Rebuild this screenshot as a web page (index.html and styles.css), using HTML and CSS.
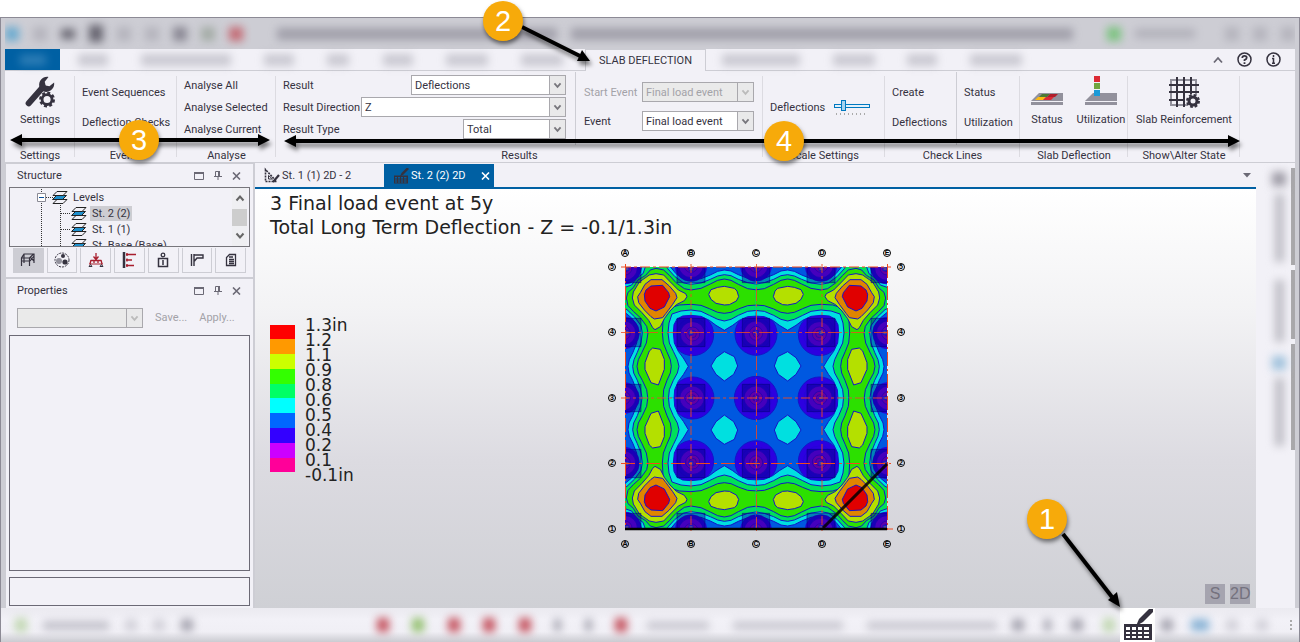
FILE: index.html
```html
<!DOCTYPE html>
<html lang="en">
<head>
<meta charset="utf-8">
<title>Slab Deflection</title>
<link rel="stylesheet" href="styles.css">
</head>
<body>
<svg class="defs" width="0" height="0" aria-hidden="true">
  <defs>
    <symbol id="chev" viewBox="0 0 10 8"><path d="M1.5 1.5 5 5.5 8.5 1.5" fill="none" stroke="currentColor" stroke-width="2"/></symbol>
    <symbol id="maximize" viewBox="0 0 10 8"><path d="M.5.5h9v7h-9z" fill="none" stroke="currentColor"/><path d="M0 0h10v2H0z" fill="currentColor"/></symbol>
    <symbol id="pin" viewBox="0 0 8 9"><path d="M1.5.5h4v5h-4zM0 5.5h8M4 6v3" fill="none" stroke="currentColor"/><path d="M4 0h2v6H4z" fill="currentColor"/></symbol>
    <symbol id="close" viewBox="0 0 9 8"><path d="M1 .5l7 7M8 .5l-7 7" fill="none" stroke="currentColor" stroke-width="1.6"/></symbol>
    <symbol id="level" viewBox="0 0 16 13"><path d="M5 8.500h10l-4 4H1z" fill="#f2f1f7" stroke="#222"/><path d="M4.500 4.500h10l-4 4H.5z" fill="#2090cc" stroke="#222"/><path d="M5 .5h10l-4 4H1z" fill="#f2f1f7" stroke="#222"/></symbol>
    <symbol id="slabpen" viewBox="0 0 32 32"><path d="M2 15h28v16H2z" fill="currentColor"/><path d="M4 18h4v3H4zm6 0h4v3h-4zm6 0h4v3h-4zm6 0h5v3h-5zM4 23h4v2H4zm6 0h4v2h-4zm6 0h4v2h-4zm6 0h5v2h-5zM4 27h4v2H4zm6 0h4v2h-4zm6 0h4v2h-4zm6 0h5v2h-5z" fill="var(--hole,#fff)"/><path d="M14 17l3-7L28-1h3v4L21 13z" fill="currentColor"/></symbol>
  </defs>
</svg>

<div class="window">
  <header class="titlebar" aria-label="Title bar">
    <i class="b logo"></i><i class="b faint"></i><i class="b wide"></i><i class="b big"></i><i class="b faint"></i><i class="b faint"></i><i class="b"></i><i class="b green"></i><i class="b red"></i>
    <i class="b title"></i><i class="b title long"></i><i class="b dot"></i><i class="b name"></i><i class="b faint"></i><i class="b faint"></i><i class="b faint"></i>
  </header>

  <nav class="tabs" aria-label="Ribbon tabs">
    <button class="file" type="button" aria-label="File"><i class="b"></i></button>
    <span class="ghost left"><i class="b w30"></i><i class="b w90"></i><i class="b w30"></i><i class="b w20"></i><i class="b w30"></i><i class="b w40"></i><i class="b w40"></i></span>
    <button class="tab" type="button">SLAB DEFLECTION</button>
    <span class="ghost right"><i class="b w80"></i><i class="b w40"></i><i class="b w30"></i><i class="b w50"></i></span>
    <span class="helpers">
      <button type="button" aria-label="Collapse ribbon"><svg width="10" height="8"><path d="M1 6.500 5 2l4 4.500" fill="none" stroke="#6b6975" stroke-width="1.800"/></svg></button>
      <button type="button" aria-label="Help"><svg width="15" height="15"><circle cx="7.500" cy="7.500" r="6.500" fill="none" stroke="#35323f" stroke-width="1.500"/><path d="M5.300 6q0-2.200 2.200-2.200T9.700 5.700q0 1.300-2.200 2.400v1M7.500 10.200v1.800" fill="none" stroke="#35323f" stroke-width="1.800"/></svg></button>
      <button type="button" aria-label="About"><svg width="15" height="15"><circle cx="7.500" cy="7.500" r="6.500" fill="none" stroke="#35323f" stroke-width="1.500"/><path d="M7.500 3v2M6 6.500h1.500V11M6 11.200h3" fill="none" stroke="#35323f" stroke-width="1.500"/></svg></button>
    </span>
  </nav>

  <section class="ribbon" aria-label="Slab deflection ribbon">
    <div class="group g-settings">
      <div class="body"><button class="large" type="button">
        <svg width="34" height="34" viewBox="0 0 34 34"><path d="M5 29 20 12" stroke="#35323f" stroke-width="6.500" stroke-linecap="round"/><path d="M17 13C14 7 19 0 26 1l-4 5 1 4 4 1 5-4c1 7-6 12-12 9z" fill="#35323f"/><circle cx="24.500" cy="25" r="5.300" fill="none" stroke="#35323f" stroke-width="3"/><circle cx="24.500" cy="25" r="7.200" fill="none" stroke="#35323f" stroke-width="2.500" stroke-dasharray="3.200 2.450"/></svg>
        <span>Settings</span></button></div>
      <h2>Settings</h2>
    </div>
    <div class="group g-events">
      <div class="body two"><button type="button">Event Sequences</button><button type="button">Deflection Checks</button></div>
      <h2>Events</h2>
    </div>
    <div class="group g-analyse">
      <div class="body three"><button type="button">Analyse All</button><button type="button">Analyse Selected</button><button type="button">Analyse Current</button></div>
      <h2>Analyse</h2>
    </div>
    <div class="group g-results">
      <div class="body split">
        <div class="fields">
          <div class="field"><label for="result">Result</label><span class="combo c-mid"><select id="result"><option>Deflections</option></select><svg><use href="#chev"/></svg></span></div>
          <div class="field"><label for="dir">Result Direction</label><span class="combo c-wide"><select id="dir"><option>Z</option></select><svg><use href="#chev"/></svg></span></div>
          <div class="field"><label for="type">Result Type</label><span class="combo c-small"><select id="type"><option>Total</option></select><svg><use href="#chev"/></svg></span></div>
        </div>
        <div class="fields events">
          <div class="field off"><label for="start">Start Event</label><span class="combo c-event"><select id="start" disabled><option>Final load event</option></select><svg><use href="#chev"/></svg></span></div>
          <div class="field"><label for="event">Event</label><span class="combo c-event"><select id="event"><option>Final load event</option></select><svg><use href="#chev"/></svg></span></div>
        </div>
      </div>
      <h2>Results</h2>
    </div>
    <div class="group g-scale">
      <div class="body scale"><label for="scale">Deflections</label><span class="slider"><input id="scale" type="range" min="0" max="100" value="20"><i></i></span></div>
      <h2>Scale Settings</h2>
    </div>
    <div class="group g-lines">
      <div class="body split">
        <div class="two"><button type="button">Create</button><button type="button">Deflections</button></div>
        <div class="two second"><button type="button">Status</button><button type="button">Utilization</button></div>
      </div>
      <h2>Check Lines</h2>
    </div>
    <div class="group g-slab">
      <div class="body pair">
        <button class="large" type="button"><svg width="32" height="32" viewBox="0 0 32 32"><path d="M0 25 8 17h24v8zM0 26h32v3H0z" fill="#92919c"/><path d="M11 18h8l-3 3H8z" fill="#4b7a35"/><path d="M19 18h8l-3 3h-8z" fill="#b01e2b"/><path d="M7 21h8l-3 3H4z" fill="#fbb913"/><path d="M15 21h8l-3 3h-8z" fill="#dc2a35"/></svg><span>Status</span></button>
        <button class="large" type="button"><svg width="32" height="32" viewBox="0 0 32 32"><path d="M0 25 8 17h24v8zM0 26h32v3H0z" fill="#92919c"/><path d="M9 0h6v6H9z" fill="#dc2a35"/><path d="M9 7h6v6H9z" fill="#71a540"/><path d="M9 14h6v6H9z" fill="#1a9ad8"/></svg><span>Utilization</span></button>
      </div>
      <h2>Slab Deflection</h2>
    </div>
    <div class="group g-state">
      <div class="body"><button class="large" type="button"><svg width="32" height="32" viewBox="0 0 32 32"><path d="M3 4h25v25H3z" fill="none" stroke="#92919c" stroke-width="2"/><path d="M9 1v30M16 1v30M23 1v20M1 9h30M1 16h30M1 24h16" stroke="#35323f" stroke-width="2"/><circle cx="25" cy="25" r="7" fill="#f2f1f7"/><circle cx="25" cy="25" r="4" fill="none" stroke="#35323f" stroke-width="3"/><circle cx="25" cy="25" r="6" fill="none" stroke="#35323f" stroke-width="2" stroke-dasharray="2.700 2"/></svg><span>Slab Reinforcement</span></button></div>
      <h2>Show\Alter State</h2>
    </div>
  </section>

  <main class="workspace">
    <aside class="side">
      <section class="panel structure">
        <header><h3>Structure</h3><button type="button" aria-label="Maximize"><svg width="10" height="8"><use href="#maximize"/></svg></button><button type="button" aria-label="Pin"><svg width="8" height="9"><use href="#pin"/></svg></button><button type="button" aria-label="Close"><svg width="9" height="8"><use href="#close"/></svg></button></header>
        <div class="tree">
          <ul>
            <li class="root"><svg class="lead" width="20" height="16"><path d="M5.500 0v16M10 8.500h10" stroke="#333" stroke-dasharray="1 1"/><path d="M1.500 4.500h8v8h-8z" fill="#fff" stroke="#8a8a94"/><path d="M3 8.500h5" stroke="#0b4f9a"/></svg><svg width="16" height="13"><use href="#level"/></svg><span>Levels</span></li>
            <li class="sel"><svg class="lead" width="39" height="16"><path d="M5.500 0v16M24.500 0v16M25 8.500h10" stroke="#333" stroke-dasharray="1 1"/></svg><svg width="16" height="13"><use href="#level"/></svg><span>St. 2 (2)</span></li>
            <li><svg class="lead" width="39" height="16"><path d="M5.500 0v16M24.500 0v16M25 8.500h10" stroke="#333" stroke-dasharray="1 1"/></svg><svg width="16" height="13"><use href="#level"/></svg><span>St. 1 (1)</span></li>
            <li><svg class="lead" width="39" height="16"><path d="M5.500 0v16M24.500 0v16" stroke="#333" stroke-dasharray="1 1"/></svg><svg width="16" height="13"><use href="#level"/></svg><span>St. Base (Base)</span></li>
          </ul>
          <div class="scroll"><svg class="up" width="10" height="8"><use href="#chev"/></svg><i></i><svg width="10" height="8"><use href="#chev"/></svg></div>
        </div>
        <div class="tools">
          <button class="on" type="button" aria-label="Structure"><svg width="16" height="16"><path d="M1.500 14V6L4 2h10v9M1.500 6h8V14M9.500 6l4-4M4 2v9M1 9h9M10 5l4 4M10 9l4-5" fill="none" stroke="#35323f" stroke-width="1.200"/></svg></button>
          <button type="button" aria-label="Groups"><svg width="16" height="16"><circle cx="8" cy="8" r="7" fill="none" stroke="#35323f" stroke-dasharray="2 1"/><circle cx="5" cy="9" r="3" fill="#92919c"/><circle cx="9" cy="4" r="2" fill="#35323f"/><circle cx="11" cy="10" r="2.600" fill="#35323f"/></svg></button>
          <button type="button" aria-label="Loading"><svg width="16" height="16"><path d="M8 1v6M5.500 4.500 8 7.500l2.500-3M3 8.500h10M3 8l-1 4M13 8l1 4M6 8v3M10 8v3" fill="none" stroke="#a81e2d" stroke-width="1.300"/><path d="M1 12h14" stroke="#a81e2d"/><path d="M1 14.500l1.500-2 1.500 2zM12 14.500l1.500-2 1.500 2z" fill="none" stroke="#35323f"/></svg></button>
          <button type="button" aria-label="Levels"><svg width="16" height="16"><path d="M2 0v16" stroke="#35323f" stroke-width="2.500"/><path d="M4 2.500h10M4 8h6M4 13.500h8M5 1v3M5 6.500v3M5 12v3" stroke="#a81e2d" stroke-width="1.400" fill="none"/></svg></button>
          <button type="button" aria-label="Weight"><svg width="16" height="16"><path d="M3.500 6.500h9v8h-9zM8 8v5M3 6.500h10" fill="none" stroke="#35323f" stroke-width="1.500"/><circle cx="8" cy="3" r="1.800" fill="none" stroke="#35323f" stroke-width="1.300"/></svg></button>
          <button type="button" aria-label="Connections"><svg width="16" height="16"><path d="M2.500 2v12M5 2v12M5 3h9v3H8L5.500 9" fill="none" stroke="#35323f" stroke-width="1.400"/></svg></button>
          <button type="button" aria-label="Reports"><svg width="16" height="16"><path d="M6.500 2.500h6v11h-9v-8zM6 7.500h5M6 9.500h5M6 11.500h5M6 5h4" fill="none" stroke="#35323f" stroke-width="1.300"/></svg></button>
        </div>
      </section>
      <section class="panel properties">
        <header><h3>Properties</h3><button type="button" aria-label="Maximize"><svg width="10" height="8"><use href="#maximize"/></svg></button><button type="button" aria-label="Pin"><svg width="8" height="9"><use href="#pin"/></svg></button><button type="button" aria-label="Close"><svg width="9" height="8"><use href="#close"/></svg></button></header>
        <div class="bar off"><span class="combo c-props"><select disabled aria-label="Property set"><option></option></select><svg><use href="#chev"/></svg></span><button type="button" disabled>Save...</button><button type="button" disabled>Apply...</button></div>
        <div class="box grow"></div>
        <div class="box hint"></div>
      </section>
    </aside>

    <section class="docs">
      <div class="doctabs">
        <button type="button"><svg width="16" height="16"><path d="M1.500 1.500v12h11z" fill="none" stroke="#35323f" stroke-width="1.600" stroke-dasharray="2 1"/><path d="M4.500 7.500v3.500h4z" fill="none" stroke="#35323f"/><path d="M9 14l6-7" stroke="#35323f" stroke-width="2.200"/></svg>St. 1 (1) 2D - 2</button>
        <button class="active" type="button"><svg class="pen" width="16" height="16"><use href="#slabpen"/></svg>St. 2 (2) 2D<svg class="x" width="9" height="8"><use href="#close"/></svg></button>
        <svg class="more" width="8" height="5"><path d="M0 0h8L4 4.500z" fill="#6b6975"/></svg>
      </div>
      <div class="view">
        <div class="caption"><p>3 Final load event at 5y</p><p>Total Long Term Deflection - Z = -0.1/1.3in</p></div>
        <div class="legend">
          <div class="swatches"><i class="s1"></i><i class="s2"></i><i class="s3"></i><i class="s4"></i><i class="s5"></i><i class="s6"></i><i class="s7"></i><i class="s8"></i><i class="s9"></i><i class="s10"></i></div>
          <ol><li>1.3in</li><li>1.2</li><li>1.1</li><li>0.9</li><li>0.8</li><li>0.6</li><li>0.5</li><li>0.4</li><li>0.2</li><li>0.1</li><li>-0.1in</li></ol>
        </div>
        <svg class="plot" width="310" height="310" viewBox="0 0 310 310" role="img" aria-label="Deflection contours">
          <defs>
            <clipPath id="qc"><path d="M72 83h394v395H72z"/></clipPath>
            <g id="col" stroke="#2408d0" stroke-width="2">
              <circle r="48" fill="#2c00e0"/>
              <circle r="37" fill="#7800e8"/>
              <circle r="21" fill="#a800c0"/>
              <circle r="11" fill="#b000b0"/>
            </g>
            <g id="sq"><path d="M-42-43h84v85h-84z" fill="#000080" fill-opacity=".42" stroke="#00007a" stroke-opacity=".8" stroke-width="2"/><path d="M-6-6H6V6H-6z" fill="#505a96" fill-opacity=".7"/></g>
            <g id="quarter" clip-path="url(#qc)" stroke="#1414c8" stroke-width="3" stroke-linejoin="round">
              <path d="M60 70h420v420H60z" fill="#0058e0"/>
              <g fill="#2c00e0">
                <circle cx="275" cy="286" r="63"/><circle cx="466" cy="284" r="64"/><circle cx="275" cy="477" r="64"/><circle cx="466" cy="477" r="66"/>
              </g>
              <path fill="#00e0e0" d="M470 122 440 117 412 106 390 95 370 92 350 96 328 107 300 118 270 122 245 118 225 103 206 80H122L118 100 100 111 89 129 69 133V217L92 236 107 256 111 281 107 311 96 339 85 361 81 381 84 401 95 423 106 451 111 481H219L221 451 232 426 247 406 262 381 247 356 232 336 220 311 217 281 219 256 228 239 245 230 270 228 300 231 325 243 345 258 370 273 395 258 415 243 440 232 470 230z"/>
              <path fill="#00e05a" d="M470 135 440 130 412 120 390 109 370 106 350 110 328 120 300 131 270 135 248 131 222 112 200 88 196 80H134L126 103 106 117 92 137 69 145V207L78 211 101 233 120 259 124 281 120 311 109 339 99 361 95 381 98 401 109 423 119 451 124 481H202L205 451 217 423 229 401 234 381 229 361 217 336 205 311 201 281 204 251 213 224 240 215 270 212 300 216 325 228 350 240 370 245 390 240 412 228 440 216 470 213z"/>
              <path fill="#2ce000" d="M470 152 440 148 412 135 390 123 370 119 350 123 328 134 300 147 270 152 250 148 225 130 205 108 188 92 165 87 148 92 134 108 111 122 97 145 81 159 76 176 81 199 97 216 119 236 137 261 141 281 136 311 123 339 112 361 108 381 112 401 124 423 137 451 141 481H186L188 451 198 423 208 401 211 381 208 361 197 336 187 311 184 281 186 246 194 221 210 205 235 197 270 195 300 198 325 208 350 219 370 222 390 219 412 209 440 199 470 197z"/>
              <g fill="#b4e000">
                <path d="M165 103 188 107 208 128 232 152 254 163 258 172 250 184 226 196 207 215 190 238 178 262 162 271 155 265 143 243 122 219 100 197 94 176 97 158 115 128 145 107z"/>
                <path d="M370 141 400 147 408 155 413 172 406 185 385 196 370 197 345 192 330 180 323 165 330 151 350 144z"/>
                <path d="M155 326 178 330 190 360 190 390 172 437 150 430 132 390 132 370 145 335z"/>
              </g>
              <path fill="#e08500" d="M150 121 183 121 205 140 224 162 228 175 215 195 195 222 185 235 160 239 150 232 130 212 113 190 110 172 118 160 132 135z"/>
              <path fill="#e00000" d="M150 140 185 138 203 160 206 172 190 203 165 215 147 207 132 185 130 165 135 152z"/>
              <path fill="#00e0e0" d="M370 337 400 352 410 380 398 405 370 425 345 405 330 380 345 355z"/>
              <use href="#col" x="275" y="284"/><use href="#col" x="466" y="282"/><use href="#col" x="273" y="477"/><use href="#col" x="466" y="477"/>
              <use href="#col" x="72" y="86"/><use href="#col" x="270" y="78"/><use href="#col" x="466" y="78"/><use href="#col" x="67" y="281"/><use href="#col" x="67" y="477"/>
              <use href="#sq" x="270" y="280"/><use href="#sq" x="466" y="280"/><use href="#sq" x="270" y="478"/><use href="#sq" x="466" y="478"/>
              <use href="#sq" x="78" y="88"/><use href="#sq" x="270" y="88"/><use href="#sq" x="466" y="88"/><use href="#sq" x="78" y="280"/><use href="#sq" x="78" y="478"/>
            </g>
            <g id="half">
              <use href="#quarter" transform="translate(24 23) scale(.33333) translate(-72 -83)"/>
              <use href="#quarter" transform="translate(286 23) scale(-.33333 .33333) translate(-72 -83)"/>
            </g>
          </defs>
          <use href="#half"/>
          <use href="#half" transform="translate(0 308) scale(1 -1)"/>
          <g stroke="#f04a1e" fill="none">
            <path d="M24.500 20v266M286.500 20v266" stroke-dasharray="14 3 2 3"/>
            <path d="M155.500 20v268M20 88.500h270" stroke-opacity=".8" stroke-dasharray="14 3 3 3"/>
            <path d="M90 20v268M221 20v268M20 154h270" stroke-width="2" stroke-opacity=".45" stroke-dasharray="9 3 3 3"/>
            <path d="M20 23h270" stroke-width="2" stroke-opacity=".5" stroke-dasharray="10 3 3 3"/>
            <path d="M20 219.500h270M282 285h10" stroke-dasharray="14 4 3 4"/>
          </g>
          <path d="M24 285h262" stroke="#000" stroke-width="2.500"/>
          <path d="M222 284 286 220" stroke="#000" stroke-opacity=".85" stroke-width="3"/>
          <g class="bubbles">
            <g fill="none" stroke="#000">
              <circle cx="24" cy="9" r="3.500"/><circle cx="90" cy="9" r="3.500"/><circle cx="155" cy="9" r="3.500"/><circle cx="221" cy="9" r="3.500"/><circle cx="286" cy="9" r="3.500"/>
              <circle cx="24" cy="300" r="3.500"/><circle cx="90" cy="300" r="3.500"/><circle cx="155" cy="300" r="3.500"/><circle cx="221" cy="300" r="3.500"/><circle cx="286" cy="300" r="3.500"/>
              <circle cx="11" cy="23" r="3.500"/><circle cx="11" cy="88" r="3.500"/><circle cx="11" cy="154" r="3.500"/><circle cx="11" cy="219" r="3.500"/><circle cx="11" cy="285" r="3.500"/>
              <circle cx="300" cy="23" r="3.500"/><circle cx="300" cy="88" r="3.500"/><circle cx="300" cy="154" r="3.500"/><circle cx="300" cy="219" r="3.500"/><circle cx="300" cy="285" r="3.500"/>
            </g>
            <text x="24" y="11">A</text><text x="90" y="11">B</text><text x="155" y="11">C</text><text x="221" y="11">D</text><text x="286" y="11">E</text>
            <text x="24" y="302">A</text><text x="90" y="302">B</text><text x="155" y="302">C</text><text x="221" y="302">D</text><text x="286" y="302">E</text>
            <text x="11" y="25">5</text><text x="11" y="90">4</text><text x="11" y="156">3</text><text x="11" y="221">2</text><text x="11" y="287">1</text>
            <text x="300" y="25">5</text><text x="300" y="90">4</text><text x="300" y="156">3</text><text x="300" y="221">2</text><text x="300" y="287">1</text>
          </g>
        </svg>
        <div class="modes"><button type="button">S</button><button type="button">2D</button></div>
      </div>
    </section>

    <aside class="dock" aria-label="Docked panels">
      <div class="labels"><i class="b dark"></i><i class="b tall"></i><i class="b mid"></i><i class="b blue"></i><i class="b tall"></i></div>
      <div class="rails"><i class="r1"></i><i class="r2"></i><i class="r3"></i></div>
    </aside>
  </main>

  <footer class="status">
    <span class="st-left"><i class="b green"></i><i class="b text"></i><i class="b faint"></i><i class="b faint"></i><i class="b"></i></span>
    <span class="st-mid"><i class="b red"></i><i class="b green"></i><i class="b red"></i><i class="b red"></i><i class="b red"></i><i class="b thin"></i><i class="b thin"></i><i class="b red"></i></span>
    <span class="st-text"><i class="b w60"></i><i class="b w110"></i><i class="b w130"></i></span>
    <span class="st-icons"><i class="b"></i><i class="b thin"></i><i class="b"></i><i class="b green"></i></span>
    <button class="slab-mode" type="button" aria-label="Slab deflection view"><svg width="32" height="32"><use href="#slabpen"/></svg></button>
    <span class="st-end"><i class="b"></i><i class="b blue"></i><i class="b faint"></i><i class="b faint"></i></span>
    <i class="grip"></i>
  </footer>
</div>

<svg class="callouts" aria-hidden="true">
  <g class="arrows">
    <path d="M522 27 580 56" /><path class="tip" d="M590 61 577 61 582 50z"/>
    <path d="M22 140H258"/><path class="tip" d="M10 140 22 134V146zM270 140 258 134V146z"/>
    <path d="M296 141H1228"/><path class="tip" d="M284 141 296 135V147zM1240 141 1228 135V147z"/>
    <path d="M1063 534 1112 597"/><path class="tip" d="M1120 607 1108 600 1117 592z"/>
  </g>
  <g class="dots"><circle cx="503" cy="21" r="20"/><circle cx="139" cy="140" r="20"/><circle cx="784" cy="141" r="20"/><circle cx="1047" cy="519" r="20"/></g>
  <g class="nums"><text x="503" y="31">2</text><text x="139" y="150">3</text><text x="784" y="151">4</text><text x="1047" y="529">1</text></g>
</svg>
</body>
</html>
```

FILE: styles.css
```css
* { box-sizing: border-box; }
html { background: #fff; }
body {
  margin: 0;
  padding-top: 17px;
  min-height: 100vh;
  display: flex;
  position: relative;
  overflow: hidden;
  font: 11px/14px Roboto, "Noto Sans", sans-serif;
  color: #35323f;
}
button, select, input { font: inherit; color: inherit; margin: 0; }
button { border: 0; padding: 0; background: none; white-space: nowrap; }
h2, h3, p, ul, ol { margin: 0; padding: 0; font: inherit; list-style: none; }
svg { display: block; overflow: visible; }
.defs { position: absolute; }
.b { display: block; flex: none; filter: blur(4px); background: #a3a2ad; width: 14px; height: 14px; }

.window {
  flex: 1;
  min-width: 0;
  display: flex;
  flex-direction: column;
  background: #f2f1f7;
  border: 1px solid #8c8a95;
  border-bottom: 0;
}
.titlebar, .tabs, .ribbon, .workspace {
  border-left: 4px solid #cdcdd4;
  border-right: 4px solid #cdcdd4;
}

.titlebar {
  height: 31px;
  display: flex;
  align-items: center;
  gap: 14px;
  background: #cdcdd4;
  overflow: hidden;
}
.titlebar .b { background: #7d7b88; opacity: .85; }
.titlebar .b.logo { background: #5aa5cf; }
.titlebar .b.faint { opacity: .3; }
.titlebar .b.big { height: 17px; background: #55535f; }
.titlebar .b.wide { height: 10px; background: #55535f; }
.titlebar .b.green { opacity: .5; background: #7b8b78; }
.titlebar .b.red { background: #c35a64; }
.titlebar .b.title { width: 280px; height: 12px; opacity: .55; margin-left: 20px; }
.titlebar .b.title.long { flex: 1; width: auto; margin: 0 20px 0 0; }
.titlebar .b.dot { background: #6dc271; }
.titlebar .b.name { width: 60px; height: 9px; opacity: .35; margin-right: 16px; }

.tabs { height: 22px; display: flex; align-items: stretch; border-bottom: 1px solid #cdcdd4; }
.tabs .file { width: 55px; background: #0060a3; display: grid; place-items: center; }
.tabs .file .b { width: 26px; height: 10px; background: #4f93c4; opacity: .6; }
.ghost { display: flex; align-items: center; justify-content: space-between; }
.ghost .b { height: 12px; opacity: .5; }
.ghost.left { width: 525px; padding: 0 22px 0 18px; }
.ghost.right { flex: 1; max-width: 320px; padding: 0 4px 0 16px; }
.w20 { width: 22px; } .w30 { width: 30px; } .w40 { width: 42px; } .w50 { width: 52px; }
.w60 { width: 62px; } .w80 { width: 78px; } .w90 { width: 90px; } .w110 { width: 110px; } .w130 { width: 130px; }
.tab {
  width: 121px;
  margin-bottom: -1px;
  padding-top: 1px;
  background: #f2f1f7;
  border: 1px solid #cdcdd4;
  border-bottom: 0;
}
.helpers { margin-left: auto; display: flex; align-items: center; gap: 14px; padding-right: 14px; }

.ribbon { display: flex; height: 92px; border-bottom: 1px solid #cdcdd4; }
.group { display: flex; flex-direction: column; position: relative; flex: none; padding-top: 1px; }
.group::after { content: ""; position: absolute; right: 0; top: 5px; bottom: 5px; width: 1px; background: #dcdbe1; }
.group h2 { height: 17px; line-height: 21px; text-align: center; white-space: nowrap; }
.body { height: 73px; display: flex; }
.body > .large { flex: 1; }
.large { display: flex; flex-direction: column; align-items: center; padding-top: 4px; gap: 5px; }
.large svg { height: 32px; }
.g-settings { width: 70px; } .g-events { width: 102px; } .g-analyse { width: 99px; }
.g-results { width: 487px; } .g-scale { width: 122px; } .g-lines { width: 135px; }
.g-slab { width: 108px; } .g-state { width: 112px; }
.two, .three { display: flex; flex-direction: column; align-items: flex-start; padding: 7px 0 0 7px; gap: 2px; }
.two button { height: 28px; }
.three { padding-top: 3px; gap: 0; }
.three button { height: 22px; }
.split > * + * { border-left: 1px solid #cdcdd4; }
.split .second { flex: 1; }
.g-lines .two { width: 71px; }
.pair { justify-content: space-around; }
.fields { width: 299px; padding: 2px 9px 0 7px; }
.field { display: flex; justify-content: space-between; align-items: center; height: 22px; white-space: nowrap; }
.field label { padding-top: 1px; }
.fields.events { flex: 1; padding: 9px 9px 0 8px; display: flex; flex-direction: column; gap: 7px; }
.combo { position: relative; display: block; height: 20px; }
.combo select {
  appearance: none;
  display: block;
  width: 100%;
  height: 100%;
  padding: 1px 18px 0 3px;
  border: 1px solid #a9a8ad;
  border-radius: 0;
  background: #fff linear-gradient(#e9e9ea, #e9e9ea) right / 15px 100% no-repeat;
  opacity: 1;
}
.combo svg { position: absolute; right: 4px; top: 7px; width: 9px; height: 7px; color: #77767c; pointer-events: none; }
.combo::after { content: ""; position: absolute; right: 16px; top: 0; width: 1px; height: 100%; background: #a9a8ad; }
.c-mid { width: 155px; } .c-wide { width: 205px; } .c-small { width: 103px; } .c-event { width: 112px; } .c-props { width: 126px; }
.off, .off select { color: #a3a2a8; }
.off select { background-color: #eaeaea; }
.off .combo svg { color: #bbb; }
.scale { align-items: center; padding: 0 15px 2px 7px; justify-content: space-between; }
.slider { width: 36px; }
.slider input { appearance: none; display: block; width: 100%; height: 11px; background: none; }
.slider input::-webkit-slider-runnable-track { height: 4px; border: 1px solid #0078c0; background: #e4f2fb; }
.slider input::-webkit-slider-thumb { appearance: none; width: 5px; height: 11px; margin-top: -5px; border: 1px solid #0078c0; background: #a6d3f0; }
.slider i { display: block; height: 2px; margin: 2px 2px 0; background: repeating-linear-gradient(90deg, #aaa 0 1px, transparent 1px 4px); }

.workspace { flex: 1; display: flex; min-height: 0; }
.side { width: 250px; flex: none; display: flex; flex-direction: column; border-right: 1px solid #cdcdd4; }
.panel { border: 1px solid #cdcdd4; border-width: 1px 1px 0; display: flex; flex-direction: column; }
.panel header { display: flex; align-items: center; height: 23px; gap: 10px; padding: 0 12px 0 11px; color: #6b6975; }
.panel h3 { flex: 1; color: #35323f; }
.tree { display: flex; height: 60px; margin: 0 3px; border: 1px solid #77767c; overflow: hidden; }
.tree ul { flex: 1; padding: 1px 0 0 26px; }
.tree li { display: flex; align-items: center; height: 16px; white-space: nowrap; }
.root .lead { margin-right: -4px; }
.tree li svg + svg { margin: 0 3px 0 -4px; }
.tree li.root svg + svg { margin-left: 0; }
.tree li span { padding: 1px 2px 0; }
.tree .sel span { background: #cdcdd2; }
.scroll { width: 15px; margin-right: 2px; display: flex; flex-direction: column; align-items: center; justify-content: space-between; padding: 6px 0; color: #666; background: #efeff2; }
.scroll .up { transform: rotate(180deg); }
.scroll i { width: 15px; height: 17px; background: #cdcdcd; }
.tools { display: flex; gap: 3px; padding: 1px 7px 4px; }
.tools button { flex: 1; height: 25px; display: grid; place-items: center; border: 1px solid #cdcdd4; border-top: 0; }
.tools .on { background: #cdcdd4; }
.properties { flex: 1; border-top-width: 2px; padding-bottom: 2px; }
.bar { display: flex; align-items: center; gap: 12px; padding: 6px 10px 7px 11px; }
.box { border: 1px solid #6b6975; margin: 0 3px; }
.grow { flex: 1; }
.hint { height: 29px; margin-top: 6px; }

.docs { flex: 1; min-width: 0; display: flex; flex-direction: column; }
.doctabs { height: 26px; padding-top: 1px; display: flex; align-items: stretch; border-bottom: 2px solid #0060a3; }
.doctabs button { width: 129px; display: flex; align-items: center; gap: 2px; padding-left: 9px; }
.doctabs .active { width: 110px; background: #0060a3; color: #fff; padding: 0 4px 0 9px; }
.doctabs .pen { color: #35323f; --hole: #0060a3; }
.doctabs .x { margin-left: auto; }
.doctabs .more { align-self: center; margin: 0 5px 0 auto; }
.view {
  flex: 1;
  display: grid;
  grid-template: minmax(0, 1fr) / minmax(0, 1fr);
  background: linear-gradient(#fff, #f2f2f4 30%, #dcdbe1 65%, #cfd0d5);
  color: #222;
  font-family: "DejaVu Sans", sans-serif;
}
.view > * { grid-area: 1 / 1; }
.caption { line-height: 24px; font-size: 19px; padding: 2px 0 0 15px; }
.legend { align-self: center; display: flex; align-items: center; gap: 10px; padding-left: 15px; font-size: 17px; line-height: 15px; }
.swatches { width: 25px; height: 148px; display: flex; flex-direction: column; }
.swatches i { flex: 1; }
.s1 { background: #f00; } .s2 { background: #f90; } .s3 { background: #cf0; } .s4 { background: #3f0; } .s5 { background: #0f6; }
.s6 { background: #0ff; } .s7 { background: #06f; } .s8 { background: #30f; } .s9 { background: #c0f; } .s10 { background: #f09; }
.legend ol { height: 163px; padding-top: 1px; display: flex; flex-direction: column; justify-content: space-between; }
.plot { justify-self: center; align-self: center; }
.bubbles { stroke-width: 1px; }
.bubbles text { font: bold 7px "Liberation Sans", sans-serif; fill: #000; stroke: none; text-anchor: middle; }
.modes { justify-self: end; align-self: end; display: flex; gap: 5px; margin: 0 6px 4px 0; }
.modes button { width: 20px; height: 20px; background: #a5a4af; color: #74727e; font: 16px/20px "Liberation Sans", sans-serif; }

.dock { width: 39px; flex: none; display: flex; justify-content: space-between; padding: 5px 0 0 16px; }
.labels { display: flex; flex-direction: column; align-items: center; gap: 8px; padding-top: 4px; width: 14px; }
.labels .b { width: 9px; background: #bdbcc4; }
.labels .b.dark { width: 14px; background: #9d9ba5; }
.labels .b.tall { height: 68px; flex: none; }
.labels .b.mid { height: 62px; margin: 10px 0 6px; }
.labels .b.blue { width: 14px; background: #a0c2dc; }
.rails { width: 4px; display: flex; flex-direction: column; gap: 5px; }
.rails i { background: #a9a8ab; }
.r1 { height: 97px; } .r2 { height: 69px; } .r3 { height: 106px; }

.status {
  height: 34px;
  display: flex;
  align-items: center;
  background: linear-gradient(#ebeaf0, #f2f1f7 35%, #f0eff5 70%, #cbcbd1);
}
.status span { display: flex; align-items: center; }
.status .b { width: 12px; height: 12px; }
.status .b.red { background: #c4525e; height: 14px; }
.status .b.green { background: #93c06f; height: 14px; }
.status .b.thin { width: 7px; }
.status .b.faint { opacity: .4; }
.status .b.blue { background: #8ab4d6; width: 18px; }
.st-left { gap: 16px; width: 376px; padding-left: 14px; }
.status .st-left .b.green { opacity: .5; }
.status .st-left .text { width: 66px; height: 9px; opacity: .6; }
.st-mid { width: 250px; justify-content: space-between; }
.st-text { flex: 1; gap: 24px; padding-left: 20px; overflow: hidden; height: 30px; }
.status .st-text .b { height: 9px; opacity: .5; }
.status .w60 { width: 62px; } .status .w110 { width: 110px; } .status .w130 { width: 130px; }
.st-icons { width: 108px; justify-content: space-between; padding-right: 5px; }
.status .st-icons .green { opacity: .5; }
.slab-mode { width: 35px; height: 34px; background: #fff; display: grid; place-items: center; color: #35323f; }
.st-end { width: 135px; justify-content: space-between; padding: 0 22px 0 6px; }
.grip { width: 2px; height: 10px; margin-right: 7px; background: repeating-linear-gradient(#aaa 0 2px, transparent 2px 4px); }

.callouts { position: absolute; left: 0; top: 0; width: 100%; height: 100%; pointer-events: none; }
.arrows { fill: none; stroke: #000; stroke-width: 4px; filter: drop-shadow(2px 4px 2px rgba(0, 0, 0, .5)); }
.tip { fill: #000; stroke: none; }
.dots { fill: #f7aa0a; filter: drop-shadow(1px 3px 2px rgba(0, 0, 0, .5)); }
.nums { fill: #fff; font: 29px "Liberation Sans", sans-serif; text-anchor: middle; }
```
